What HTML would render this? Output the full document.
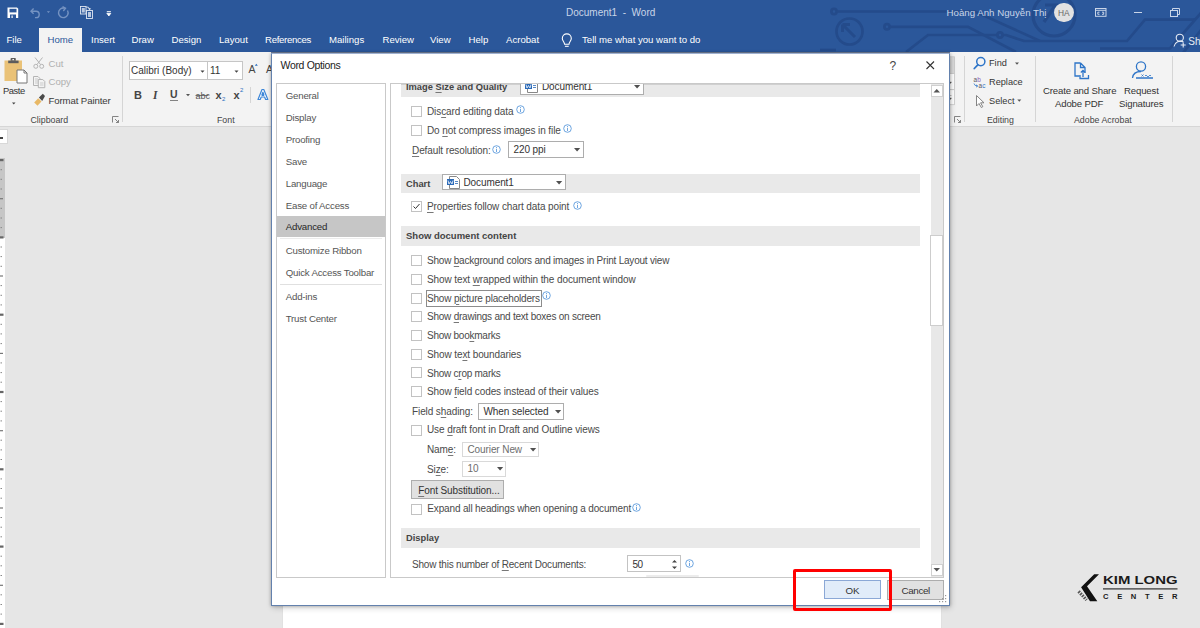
<!DOCTYPE html>
<html><head><meta charset="utf-8">
<style>
*{margin:0;padding:0;box-sizing:border-box}
html,body{width:1200px;height:628px;overflow:hidden;background:#e6e6e6;font-family:"Liberation Sans",sans-serif;position:relative}
.a{position:absolute}
.t{position:absolute;white-space:nowrap;line-height:1}
#title{left:0;top:0;width:1200px;height:52px;background:#2b579a}
#ribbon{left:0;top:52px;width:1200px;height:75px;background:#f3f3f3;border-bottom:1px solid #d6d6d6}
.tab{color:#fff;font-size:9.6px}
.rb{color:#444;font-size:9.6px}
.gl{color:#444;font-size:8.8px}
.cb{width:11px;height:11px;border:1px solid #c2c2c2;background:#fff}
u{text-decoration-color:#777;text-underline-offset:1.5px}
.sep{position:absolute;width:1px;background:#d5d5d5}
</style></head><body>

<div id="title" class="a">
<svg class="a" style="left:0;top:0" width="1200" height="52">
 <g stroke="#244b8b" stroke-width="2.7" fill="none">
  <circle cx="834" cy="11.5" r="2.6"/>
  <path d="M836.6 11.5 H975 L1040 41"/>
  <circle cx="849.5" cy="31.5" r="13"/>
  <path d="M842.5 24.5 L855 37 M842.5 24.5 V32 M842.5 24.5 H850" stroke-width="3"/>
  <circle cx="887" cy="26.8" r="2.6"/>
  <path d="M889.6 26.8 H968 L1016 52"/>
  <path d="M906 52 L928 35 H997.4 M1002.6 35 H1006 L1024 41 H1127 L1145 19.6 H1196"/>
  <path d="M1100 48.5 H1170 L1201 13 M1201 30 L1183 53"/>
  <circle cx="1000" cy="35" r="2.6"/>
  <circle cx="1054" cy="15" r="21" stroke-width="3.2"/>
  <path d="M1044 22 L1055.5 5 H1045" stroke-width="3.2"/>
  <path d="M820 50 H836"/>
 </g>
</svg>
<!-- QAT icons -->
<svg class="a" style="left:0;top:0" width="120" height="28">
 <path d="M7.5 7.5 H17 L18.2 8.7 V18 H7.5 Z" fill="#fff"/>
 <rect x="9.5" y="8.8" width="7" height="3.6" fill="#2b579a"/>
 <rect x="10" y="14.5" width="6" height="3.5" fill="#2b579a"/>
 <rect x="11.5" y="15.5" width="1.2" height="2.5" fill="#fff"/>
 <g fill="none" stroke="#7593c2" stroke-width="1.4">
  <path d="M31 11.2 H36 A3.2 3.2 0 0 1 36 17.6 H35"/>
  <path d="M33.6 8.6 L31 11.2 L33.6 13.8"/>
  <path d="M67.5 10.5 A4.8 4.8 0 1 1 64.5 8.2"/>
  <path d="M62.5 6.6 L65.5 8.3 L63.3 11"/>
 </g>
 <path d="M46.8 11.3 h3.3 l-1.65 1.6z" fill="#7593c2"/>
 <g fill="none" stroke="#dfe6f1" stroke-width="0.9">
  <rect x="80.5" y="6.5" width="5.5" height="7.5"/>
  <rect x="86.5" y="10.5" width="6" height="8"/>
  <path d="M86 7 Q89 6.5 89.5 9"/>
 </g>
 <rect x="81.8" y="8" width="3" height="4.5" fill="#b9c8e0"/>
 <rect x="88" y="12" width="3" height="5" fill="#b9c8e0"/>
 <path d="M88 8.5 h3.2 l-1.6 1.5z" fill="#fff"/>
 <path d="M106.8 11.5 h4.1 M106.8 13.2 h4.1 l-2.05 2.8z" fill="#fff" stroke="#fff" stroke-width="0.8"/>
</svg>
<div class="t" style="left:566px;top:8px;font-size:10px;color:#c9d5e8">Document1&nbsp; - &nbsp;Word</div>
<div class="t" style="left:946.5px;top:8px;font-size:9.7px;color:#c9d5e8">Hoàng Anh Nguyễn Thị</div>
<div class="a" style="left:1054px;top:2.6px;width:19.6px;height:19.6px;border-radius:50%;background:#e2e2e2"></div>
<div class="t" style="left:1058px;top:8.9px;font-size:8.4px;color:#666">HA</div>
<svg class="a" style="left:1090px;top:0" width="110" height="52">
 <g fill="none" stroke="#c9d5e8" stroke-width="1">
  <rect x="5.5" y="8.5" width="10.5" height="7.8"/>
  <path d="M5.5 10.3 H16 M9.5 12.2 H7.8 V14.3 H9.5 M12 12.2 H13.7 V14.3 H12"/>
  <path d="M44 12.5 H52"/>
  <rect x="80.5" y="10.5" width="7" height="6"/>
  <path d="M82.5 10.5 V8.5 H89.5 V14.5 H87.5"/>
 </g>
 <g fill="none" stroke="#e6ecf5" stroke-width="1.1">
  <circle cx="89.8" cy="37.8" r="3.6"/>
  <path d="M84 46.5 A6.5 6.5 0 0 1 93.5 42"/>
  <path d="M93.2 42.5 V47.5 M90.7 45 H95.7"/>
 </g>
</svg>
<div class="t" style="left:1188.3px;top:36.6px;font-size:10px;color:#e6ecf5">Share</div>
</div>

<!-- tabs -->
<div class="a" style="left:39px;top:28px;width:43px;height:25px;background:#f3f3f3"></div>
<div class="t tab" style="left:6.5px;top:35px">File</div>
<div class="t tab" style="left:47.5px;top:35px;color:#2b579a">Home</div>
<div class="t tab" style="left:91px;top:35px">Insert</div>
<div class="t tab" style="left:131.5px;top:35px">Draw</div>
<div class="t tab" style="left:171.5px;top:35px">Design</div>
<div class="t tab" style="left:219px;top:35px">Layout</div>
<div class="t tab" style="left:265px;top:35px;letter-spacing:-0.3px">References</div>
<div class="t tab" style="left:329px;top:35px">Mailings</div>
<div class="t tab" style="left:382.5px;top:35px">Review</div>
<div class="t tab" style="left:430px;top:35px">View</div>
<div class="t tab" style="left:468.5px;top:35px">Help</div>
<div class="t tab" style="left:506px;top:35px">Acrobat</div>
<svg class="a" style="left:558px;top:31px" width="20" height="20">
 <g fill="none" stroke="#fff" stroke-width="1.1">
  <path d="M6.6 13.2 C6.6 11 4.3 9.8 4.3 7.4 A4.5 4.5 0 0 1 13.3 7.4 C13.3 9.8 11 11 11 13.2 Z"/>
  <path d="M6.9 15.3 h3.8"/>
 </g>
</svg>
<div class="t tab" style="left:582px;top:35px">Tell me what you want to do</div>

<div id="ribbon" class="a"></div>

<!-- Clipboard group -->
<svg class="a" style="left:0;top:52px" width="125" height="75">
 <rect x="4.5" y="8.5" width="17.5" height="20.5" fill="#eac277"/>
 <path d="M8.2 8.6 H18.6 V11.2 H8.2 Z" fill="#5c5c5c"/>
 <path d="M10.6 8.8 V6.8 Q10.6 6 11.4 6 H15 Q15.8 6 15.8 6.8 V8.8 Z" fill="#5c5c5c"/>
 <rect x="12.4" y="7" width="1.6" height="1.2" fill="#f3f3f3"/>
 <path d="M17 18 H24 L27 21 V31 H17 Z" fill="#fff" stroke="#777" stroke-width="1"/>
 <path d="M24 18 V21 H27" fill="none" stroke="#777" stroke-width="1"/>
 <path d="M12 50.5 h3.5 l-1.75 2z" fill="#444"/>
 <g fill="none" stroke="#b4b4b4" stroke-width="1">
  <circle cx="35.8" cy="14.3" r="2"/><circle cx="41.7" cy="14.3" r="2"/>
  <path d="M37 12.5 L42.5 5.5 M40.5 12.5 L35 5.5"/>
  <path d="M33.5 24.5 h4.5 l1.8 1.8 v7.2 h-6.3z"/>
  <path d="M38.3 27.5 h4.5 l2 2 v6.2 h-6.5z" fill="#f3f3f3"/>
  <path d="M35 27 h3 M35 29 h3 M35 31 h3 M40 31 h3.5 M40 33 h3.5" stroke="#c0c0c0" stroke-width="0.8"/>
 </g>
 <path d="M34.2 50.5 L38.2 46.3 L41.5 49.6 L37.5 53.8 Z" fill="#e8b865"/>
 <path d="M38.9 45.6 L42.8 41.7 L45 43.9 L42.2 48.9 Z" fill="#4a4a4a"/>
 <path d="M112.5 64.5 h6 M112.5 64.5 v6 M115 67 l3.5 3.5 M118.5 68 v2.5 h-2.5" fill="none" stroke="#777" stroke-width="0.9"/>
</svg>
<div class="t rb" style="left:2.9px;top:86.2px;font-size:9.4px;color:#333;letter-spacing:-0.4px">Paste</div>
<div class="t rb" style="left:48.5px;top:59px;color:#b0b0b0">Cut</div>
<div class="t rb" style="left:48.5px;top:77px;color:#b0b0b0">Copy</div>
<div class="t rb" style="left:48.5px;top:96px;color:#3a3a3a;letter-spacing:-0.1px">Format Painter</div>
<div class="t gl" style="left:30.5px;top:116px">Clipboard</div>
<div class="sep" style="left:122px;top:56px;height:66px"></div>

<!-- Font group -->
<div class="a" style="left:129px;top:61px;width:79px;height:19px;background:#fff;border:1px solid #c6c6c6"></div>
<div class="a" style="left:207px;top:61px;width:36px;height:19px;background:#fff;border:1px solid #c6c6c6"></div>
<div class="t rb" style="left:131px;top:66px;font-size:10px;color:#333">Calibri (Body)</div>
<div class="t rb" style="left:210px;top:66px;font-size:10px;color:#333">11</div>
<svg class="a" style="left:120px;top:52px" width="152" height="75">
 <path d="M80.5 18.5 h4 l-2 2.2z M114.5 18.5 h4 l-2 2.2z" fill="#444"/>
 <text x="128.5" y="21.3" font-family="Liberation Sans" font-size="10.5" fill="#444">A</text>
 <path d="M134.8 13.8 l1.5 -2 l1.5 2z" fill="#2b6fc0"/>
 <text x="146" y="21.3" font-family="Liberation Sans" font-size="10.5" fill="#444">A</text>
 <text x="14" y="47" font-family="Liberation Sans" font-size="11" font-weight="bold" fill="#444">B</text>
 <text x="33" y="47" font-family="Liberation Serif" font-size="11.5" font-style="italic" font-weight="bold" fill="#444">I</text>
 <text x="50" y="46" font-family="Liberation Sans" font-size="10.5" font-weight="bold" fill="#444">U</text>
 <path d="M50 48.5 h8" stroke="#666" stroke-width="0.8"/>
 <path d="M66 42 h4 l-2 2.2z" fill="#555"/>
 <text x="75.5" y="47" font-family="Liberation Sans" font-size="9" fill="#555">abc</text>
 <path d="M75.5 43.5 h13" stroke="#555" stroke-width="0.8"/>
 <text x="95.5" y="47" font-family="Liberation Sans" font-size="11" font-weight="bold" fill="#444">x</text>
 <text x="102" y="49" font-family="Liberation Sans" font-size="6" fill="#2b6fc0">2</text>
 <text x="113.5" y="47" font-family="Liberation Sans" font-size="11" font-weight="bold" fill="#444">x</text>
 <text x="120" y="40" font-family="Liberation Sans" font-size="6" fill="#2b6fc0">2</text>
 <path d="M130.5 35 v16" stroke="#d5d5d5"/>
 <path d="M138 47.5 L142 37.5 L143.8 37.5 L147.8 47.5 L145.6 47.5 L144.6 45 L141.2 45 L140.2 47.5 Z M141.9 43 L143.9 43 L142.9 40.2 Z" fill="#fff" stroke="#3c86d8" stroke-width="1.2" stroke-linejoin="round"/><path d="M141.6 44 L142.9 40.8 L144.2 44Z" fill="#3c86d8"/>
</svg>
<div class="t gl" style="left:217px;top:116px">Font</div>

<!-- right side of ribbon -->
<svg class="a" style="left:949px;top:52px" width="251" height="75">
 <rect x="0" y="4.8" width="5.5" height="16.7" fill="#dadada" stroke="#c8c8c8" stroke-width="0.8"/>
 <rect x="0" y="21.5" width="5.5" height="16.2" fill="#fff" stroke="#c8c8c8" stroke-width="0.8"/>
 <rect x="0" y="37.7" width="5.5" height="15" fill="#fff" stroke="#c8c8c8" stroke-width="0.8"/>
 <path d="M0 30 h2.5 l-1.25 1.5z M0 46 h2.5 l-1.25 1.5z M0 43.5 h2.5" fill="#555" stroke="#555" stroke-width="0.4"/>
 <path d="M5.5 64.5 h6 M5.5 64.5 v6 M8 67 l3.5 3.5 M11.5 68 v2.5 h-2.5" fill="none" stroke="#777" stroke-width="0.9"/>
 <path d="M15.5 4 v66 M86.5 4 v66 M223.5 4 v66" stroke="#d5d5d5"/>
 <g fill="none" stroke="#2e75c8" stroke-width="1.5">
  <circle cx="31.8" cy="9.6" r="4.1"/>
  <path d="M28.8 12.8 L25.3 16.5" stroke-width="1.8" stroke-linecap="round"/>
 </g>
 <text x="24.5" y="29.8" font-family="Liberation Sans" font-size="6.4" fill="#555">a</text>
 <text x="28.2" y="29.8" font-family="Liberation Sans" font-size="6.4" fill="#8b5cb8">b</text>
 <text x="29.5" y="35.6" font-family="Liberation Sans" font-size="6.4" fill="#555">a</text>
 <text x="33.2" y="35.6" font-family="Liberation Sans" font-size="6.4" fill="#2e75c8">c</text>
 <path d="M25 31.5 Q25.5 34 28.5 34 M27 32.8 L28.7 34 L27 35.2" fill="none" stroke="#2e75c8" stroke-width="0.8"/>
 <path d="M27.5 43.5 V54 L30 51.5 L32.3 55.5 L33.8 54.7 L31.6 50.8 H35 Z" fill="#fff" stroke="#777" stroke-width="0.9"/>
 <path d="M66 10.5 h4 l-2 2.2z M68.3 47.5 h4 l-2 2.2z" fill="#555"/>
 <g fill="none" stroke="#2e75c8" stroke-width="1.3">
  <path d="M131.5 11 H126 V24 H130.5 M131.5 11 L136 15.5 V21 M131.5 11 V15.5 H136"/>
  <path d="M134 18.5 V25 M131.8 20.5 L134 18.3 L136.2 20.5 M131 23 V26.5 H139.5 V23"/>
  <circle cx="192" cy="14.5" r="4.6"/>
  <path d="M183.5 26 C184 21.5 187.5 19.5 192 19.5 M187 26 H190"/>
  <path d="M190 26 H204" stroke-width="1.5"/>
 </g>
 <path d="M192.5 22.5 l2 2 M194.5 22.5 l-2 2 M196 24 q1 -2 2 0 q1 2 2 0 q1 -2 2 0" fill="none" stroke="#2e75c8" stroke-width="0.8"/>
</svg>
<div class="t rb" style="left:989px;top:59px;color:#333;font-size:9.2px">Find</div>
<div class="t rb" style="left:989px;top:78px;color:#333;font-size:9.2px">Replace</div>
<div class="t rb" style="left:989px;top:96.5px;color:#333;font-size:9.2px">Select</div>
<div class="t gl" style="left:987px;top:116px">Editing</div>
<div class="t rb" style="left:1043px;top:86px;color:#333;letter-spacing:-0.15px">Create and Share</div>
<div class="t rb" style="left:1055px;top:99px;color:#333;letter-spacing:-0.15px">Adobe PDF</div>
<div class="t rb" style="left:1124px;top:86px;color:#333;letter-spacing:-0.15px">Request</div>
<div class="t rb" style="left:1119px;top:99px;color:#333;letter-spacing:-0.15px">Signatures</div>
<div class="t gl" style="left:1074px;top:116px">Adobe Acrobat</div>


<!-- document area -->
<div class="a" style="left:0;top:128.5px;width:7.5px;height:15px;background:#fff;border:1px solid #d8d8d8;border-left:none"></div><div class="a" style="left:0;top:137px;width:3px;height:1.5px;background:#444"></div>
<div class="a" style="left:0;top:158px;width:4.5px;height:79.5px;background:#c6c6c6"></div>
<div class="a" style="left:0;top:237.5px;width:4.5px;height:391px;background:#fff"></div>
<svg class="a" style="left:0;top:0" width="6" height="628"><rect x="0" y="159.0" width="3.5" height="2.2" fill="#666"/><rect x="0.5" y="169.2" width="1.5" height="1" fill="#888"/><rect x="0.5" y="178.8" width="1.5" height="1" fill="#888"/><rect x="0.5" y="188.5" width="1.5" height="1" fill="#888"/><rect x="0" y="198.1" width="3" height="1.2" fill="#777"/><rect x="0.5" y="207.8" width="1.5" height="1" fill="#888"/><rect x="0.5" y="217.5" width="1.5" height="1" fill="#888"/><rect x="0.5" y="227.1" width="1.5" height="1" fill="#888"/><rect x="0" y="236.3" width="3.5" height="2.2" fill="#666"/><rect x="0.5" y="246.5" width="1.5" height="1" fill="#888"/><rect x="0.5" y="256.1" width="1.5" height="1" fill="#888"/><rect x="0.5" y="265.8" width="1.5" height="1" fill="#888"/><rect x="0" y="275.4" width="3" height="1.2" fill="#777"/><rect x="0.5" y="285.1" width="1.5" height="1" fill="#888"/><rect x="0.5" y="294.8" width="1.5" height="1" fill="#888"/><rect x="0.5" y="304.4" width="1.5" height="1" fill="#888"/><rect x="0" y="313.6" width="3.5" height="2.2" fill="#666"/><rect x="0.5" y="323.8" width="1.5" height="1" fill="#888"/><rect x="0.5" y="333.4" width="1.5" height="1" fill="#888"/><rect x="0.5" y="343.1" width="1.5" height="1" fill="#888"/><rect x="0" y="352.8" width="3" height="1.2" fill="#777"/><rect x="0.5" y="362.4" width="1.5" height="1" fill="#888"/><rect x="0.5" y="372.1" width="1.5" height="1" fill="#888"/><rect x="0.5" y="381.7" width="1.5" height="1" fill="#888"/><rect x="0" y="390.9" width="3.5" height="2.2" fill="#666"/><rect x="0.5" y="401.1" width="1.5" height="1" fill="#888"/><rect x="0.5" y="410.7" width="1.5" height="1" fill="#888"/><rect x="0.5" y="420.4" width="1.5" height="1" fill="#888"/><rect x="0" y="430.1" width="3" height="1.2" fill="#777"/><rect x="0.5" y="439.7" width="1.5" height="1" fill="#888"/><rect x="0.5" y="449.4" width="1.5" height="1" fill="#888"/><rect x="0.5" y="459.0" width="1.5" height="1" fill="#888"/><rect x="0" y="468.2" width="3.5" height="2.2" fill="#666"/><rect x="0.5" y="478.4" width="1.5" height="1" fill="#888"/><rect x="0.5" y="488.0" width="1.5" height="1" fill="#888"/><rect x="0.5" y="497.7" width="1.5" height="1" fill="#888"/><rect x="0" y="507.4" width="3" height="1.2" fill="#777"/><rect x="0.5" y="517.0" width="1.5" height="1" fill="#888"/><rect x="0.5" y="526.7" width="1.5" height="1" fill="#888"/><rect x="0.5" y="536.3" width="1.5" height="1" fill="#888"/><rect x="0" y="545.5" width="3.5" height="2.2" fill="#666"/><rect x="0.5" y="555.7" width="1.5" height="1" fill="#888"/><rect x="0.5" y="565.3" width="1.5" height="1" fill="#888"/><rect x="0.5" y="575.0" width="1.5" height="1" fill="#888"/><rect x="0" y="584.7" width="3" height="1.2" fill="#777"/><rect x="0.5" y="594.3" width="1.5" height="1" fill="#888"/><rect x="0.5" y="604.0" width="1.5" height="1" fill="#888"/><rect x="0.5" y="613.6" width="1.5" height="1" fill="#888"/><rect x="0" y="622.8" width="3.5" height="2.2" fill="#666"/></svg>
<div class="a" style="left:283px;top:127px;width:658px;height:501px;background:#fff;box-shadow:0 0 1px #c8c8c8"></div>

<!-- dialog -->
<div class="a" style="left:271px;top:52px;width:679px;height:1px;background:#737f98"></div>
<div class="a" style="left:271px;top:53px;width:679px;height:553px;background:#fff;border:1px solid #6381ad;border-top-color:#9fb1d0;box-shadow:0 0 3px rgba(0,0,0,0.28),1px 2px 6px rgba(0,0,0,0.18)"></div>

<div class="t" style="left:280.5px;top:60.2px;font-size:10.5px;color:#222;letter-spacing:-0.33px">Word Options</div>
<svg class="a" style="left:885px;top:58px" width="55" height="16"><text x="4.5" y="11.5" font-family="Liberation Sans" font-size="12" fill="#444">?</text><path d="M41.5 3.5 L49 11 M49 3.5 L41.5 11" stroke="#333" stroke-width="1.1"/></svg>
<div class="a" style="left:276px;top:83px;width:110px;height:495px;border:1px solid #c9c9c9;background:#fff"></div>
<div class="a" style="left:277px;top:215.8px;width:108px;height:21.7px;background:#c6c6c6"></div>
<div class="a" style="left:280px;top:284px;width:102px;height:1px;background:#e0e0e0"></div>
<div class="a" style="left:280px;top:238.2px;width:102px;height:1px;background:#ececec"></div>
<div class="t" style="left:285.7px;top:90.79px;font-size:9.7px;color:#555;letter-spacing:-0.2px;">General</div>
<div class="t" style="left:285.7px;top:112.79px;font-size:9.7px;color:#555;letter-spacing:-0.2px;">Display</div>
<div class="t" style="left:285.7px;top:134.79px;font-size:9.7px;color:#555;letter-spacing:-0.2px;">Proofing</div>
<div class="t" style="left:285.7px;top:156.79px;font-size:9.7px;color:#555;letter-spacing:-0.2px;">Save</div>
<div class="t" style="left:285.7px;top:178.79px;font-size:9.7px;color:#555;letter-spacing:-0.2px;">Language</div>
<div class="t" style="left:285.7px;top:200.79px;font-size:9.7px;color:#555;letter-spacing:-0.2px;">Ease of Access</div>
<div class="t" style="left:285.7px;top:222.29px;font-size:9.7px;color:#262626;letter-spacing:-0.2px;">Advanced</div>
<div class="t" style="left:285.7px;top:246.49px;font-size:9.7px;color:#555;letter-spacing:-0.2px;">Customize Ribbon</div>
<div class="t" style="left:285.7px;top:268.49px;font-size:9.7px;color:#555;letter-spacing:-0.2px;">Quick Access Toolbar</div>
<div class="t" style="left:285.7px;top:292.49px;font-size:9.7px;color:#555;letter-spacing:-0.2px;">Add-ins</div>
<div class="t" style="left:285.7px;top:314.49px;font-size:9.7px;color:#555;letter-spacing:-0.2px;">Trust Center</div>
<div class="a" style="left:390px;top:83px;width:554px;height:495px;border:1px solid #c9c9c9;background:#fff"></div>
<div class="a" style="left:391px;top:84px;width:538px;height:492px;overflow:hidden" id="inner"></div>
<div class="a" style="left:401px;top:84.0px;width:519px;height:13px;background:#e9e9e9"></div>
<div class="a" style="left:401px;top:173.5px;width:519px;height:19.0px;background:#e9e9e9"></div>
<div class="a" style="left:401px;top:226.2px;width:519px;height:19.6px;background:#e9e9e9"></div>
<div class="a" style="left:401px;top:528.0px;width:519px;height:20.0px;background:#e9e9e9"></div>
<div class="a" style="left:401px;top:84px;width:519px;height:1px;background:#d0d0d0"></div>
<div class="t" style="left:406.0px;top:83.13px;font-size:9.30px;color:#444;font-weight:bold">Image <u>S</u>ize and Quality</div>
<div class="a" style="left:520.0px;top:78.0px;width:123.6px;height:16.5px;background:#fff;border:1px solid #adadad"></div>
<div class="t" style="left:542.0px;top:82.03px;font-size:10px;color:#333;letter-spacing:-0.1px;">Document1</div>
<svg class="a" style="left:634.1px;top:84.8px" width="8" height="5"><path d="M0 0 H6.2 L3.1 3.4Z" fill="#505050"/></svg>
<svg class="a" style="left:525.0px;top:80.0px" width="14" height="13"><path d="M2.5 0.5 H9.5 L12.5 3.5 V12.5 H2.5Z" fill="#fff" stroke="#888" stroke-width="1"/><rect x="0" y="3" width="7" height="6" fill="#2b6ab8"/><path d="M1 4.5 L2 8 L3.5 5.5 L5 8 L6 4.5" fill="none" stroke="#fff" stroke-width="0.8"/><path d="M8 5.5 h3 M8 7.5 h3" stroke="#2b6ab8" stroke-width="0.8"/></svg>
<div class="a" style="left:391px;top:74px;width:553px;height:9px;background:#fff"></div>
<div class="a" style="left:390px;top:83px;width:554px;height:1px;background:#c9c9c9"></div>
<div class="a cb" style="left:411.0px;top:106.0px"></div>
<div class="t" style="left:427.0px;top:106.53px;font-size:10px;color:#4a4a4a;letter-spacing:-0.1px;">Dis<u>c</u>ard editing data</div>
<svg class="a" style="left:516.0px;top:104.5px" width="10" height="10"><circle cx="4.5" cy="4.5" r="3.8" fill="none" stroke="#4a8fd8" stroke-width="0.8"/><path d="M4.5 3.8 V7" stroke="#4a8fd8" stroke-width="0.8"/><circle cx="4.5" cy="2.4" r="0.5" fill="#4a8fd8"/></svg>
<div class="a cb" style="left:411.0px;top:125.0px"></div>
<div class="t" style="left:427.0px;top:125.53px;font-size:10px;color:#4a4a4a;letter-spacing:-0.1px;">Do <u>n</u>ot compress images in file</div>
<svg class="a" style="left:562.5px;top:123.5px" width="10" height="10"><circle cx="4.5" cy="4.5" r="3.8" fill="none" stroke="#4a8fd8" stroke-width="0.8"/><path d="M4.5 3.8 V7" stroke="#4a8fd8" stroke-width="0.8"/><circle cx="4.5" cy="2.4" r="0.5" fill="#4a8fd8"/></svg>
<div class="t" style="left:412.0px;top:145.53px;font-size:10px;color:#4a4a4a;letter-spacing:-0.1px;"><u>D</u>efault resolution:</div>
<svg class="a" style="left:491.5px;top:144.5px" width="10" height="10"><circle cx="4.5" cy="4.5" r="3.8" fill="none" stroke="#4a8fd8" stroke-width="0.8"/><path d="M4.5 3.8 V7" stroke="#4a8fd8" stroke-width="0.8"/><circle cx="4.5" cy="2.4" r="0.5" fill="#4a8fd8"/></svg>
<div class="a" style="left:507.5px;top:141.0px;width:76.1px;height:17.0px;background:#fff;border:1px solid #adadad"></div>
<div class="t" style="left:513.5px;top:145.03px;font-size:10px;color:#333;letter-spacing:-0.1px;">220 ppi</div>
<svg class="a" style="left:574.1px;top:148.3px" width="8" height="5"><path d="M0 0 H6.2 L3.1 3.4Z" fill="#505050"/></svg>
<div class="t" style="left:406.0px;top:180.13px;font-size:9.30px;color:#444;font-weight:bold">Chart</div>
<div class="a" style="left:442.0px;top:174.0px;width:123.6px;height:16.0px;background:#fff;border:1px solid #adadad"></div>
<div class="t" style="left:463.5px;top:177.53px;font-size:10px;color:#333;letter-spacing:-0.1px;">Document1</div>
<svg class="a" style="left:556.1px;top:180.8px" width="8" height="5"><path d="M0 0 H6.2 L3.1 3.4Z" fill="#505050"/></svg>
<svg class="a" style="left:447.0px;top:176.0px" width="14" height="13"><path d="M2.5 0.5 H9.5 L12.5 3.5 V12.5 H2.5Z" fill="#fff" stroke="#888" stroke-width="1"/><rect x="0" y="3" width="7" height="6" fill="#2b6ab8"/><path d="M1 4.5 L2 8 L3.5 5.5 L5 8 L6 4.5" fill="none" stroke="#fff" stroke-width="0.8"/><path d="M8 5.5 h3 M8 7.5 h3" stroke="#2b6ab8" stroke-width="0.8"/></svg>
<div class="a cb" style="left:411.0px;top:201.2px"></div>
<svg class="a" style="left:411.0px;top:201.2px" width="11" height="11"><path d="M2.5 5.5 L4.5 7.5 L8.5 3" fill="none" stroke="#333" stroke-width="1"/></svg>
<div class="t" style="left:427.0px;top:202.03px;font-size:10px;color:#4a4a4a;letter-spacing:-0.1px;"><u>P</u>roperties follow chart data point</div>
<svg class="a" style="left:573.4px;top:200.8px" width="10" height="10"><circle cx="4.5" cy="4.5" r="3.8" fill="none" stroke="#4a8fd8" stroke-width="0.8"/><path d="M4.5 3.8 V7" stroke="#4a8fd8" stroke-width="0.8"/><circle cx="4.5" cy="2.4" r="0.5" fill="#4a8fd8"/></svg>
<div class="t" style="left:406.0px;top:230.56px;font-size:9.50px;color:#444;font-weight:bold">Show document content</div>
<div class="a cb" style="left:411.0px;top:255.3px"></div>
<div class="t" style="left:427.0px;top:256.04px;font-size:10px;color:#4a4a4a;letter-spacing:-0.21px;">Show <u>b</u>ackground colors and images in Print Layout view</div>
<div class="a cb" style="left:411.0px;top:273.9px"></div>
<div class="t" style="left:427.0px;top:274.79px;font-size:10px;color:#4a4a4a;letter-spacing:-0.1px;">Show text <u>w</u>rapped within the document window</div>
<div class="a cb" style="left:411.0px;top:292.6px"></div>
<div class="t" style="left:427.0px;top:293.54px;font-size:10px;color:#4a4a4a;letter-spacing:-0.18px;">Show <u>p</u>icture placeholders</div>
<div class="a cb" style="left:411.0px;top:311.2px"></div>
<div class="t" style="left:427.0px;top:312.29px;font-size:10px;color:#4a4a4a;letter-spacing:-0.23px;">Show <u>d</u>rawings and text boxes on screen</div>
<div class="a cb" style="left:411.0px;top:329.9px"></div>
<div class="t" style="left:427.0px;top:331.04px;font-size:10px;color:#4a4a4a;letter-spacing:-0.25px;">Show boo<u>k</u>marks</div>
<div class="a cb" style="left:411.0px;top:348.6px"></div>
<div class="t" style="left:427.0px;top:349.79px;font-size:10px;color:#4a4a4a;letter-spacing:-0.1px;">Show te<u>x</u>t boundaries</div>
<div class="a cb" style="left:411.0px;top:367.2px"></div>
<div class="t" style="left:427.0px;top:368.54px;font-size:10px;color:#4a4a4a;letter-spacing:-0.25px;">Show c<u>r</u>op marks</div>
<div class="a cb" style="left:411.0px;top:385.9px"></div>
<div class="t" style="left:427.0px;top:387.29px;font-size:10px;color:#4a4a4a;letter-spacing:-0.1px;">Show <u>f</u>ield codes instead of their values</div>
<div class="a" style="left:425.5px;top:290.2px;width:116.5px;height:16.5px;border:1px solid #8c8c8c"></div>
<svg class="a" style="left:542.1px;top:290.8px" width="10" height="10"><circle cx="4.5" cy="4.5" r="3.8" fill="none" stroke="#4a8fd8" stroke-width="0.8"/><path d="M4.5 3.8 V7" stroke="#4a8fd8" stroke-width="0.8"/><circle cx="4.5" cy="2.4" r="0.5" fill="#4a8fd8"/></svg>
<div class="t" style="left:412.0px;top:406.63px;font-size:10px;color:#4a4a4a;letter-spacing:-0.1px;">Field s<u>h</u>ading:</div>
<div class="a" style="left:478.4px;top:403.3px;width:86.1px;height:16.3px;background:#fff;border:1px solid #adadad"></div>
<div class="t" style="left:483.5px;top:406.53px;font-size:10px;color:#333;letter-spacing:-0.1px;">When selected</div>
<svg class="a" style="left:555.0px;top:410.3px" width="8" height="5"><path d="M0 0 H6.2 L3.1 3.4Z" fill="#505050"/></svg>
<div class="a cb" style="left:411.0px;top:424.5px"></div>
<div class="t" style="left:427.0px;top:425.03px;font-size:10px;color:#4a4a4a;letter-spacing:-0.1px;">Use <u>d</u>raft font in Draft and Outline views</div>
<div class="t" style="left:427.0px;top:444.53px;font-size:10px;color:#4a4a4a;letter-spacing:-0.1px;">Nam<u>e</u>:</div>
<div class="a" style="left:462.4px;top:441.6px;width:77.0px;height:15.8px;background:#fff;border:1px solid #d9d9d9"></div>
<div class="t" style="left:467.5px;top:444.53px;font-size:10px;color:#6d6d6d;letter-spacing:-0.1px;">Courier New</div>
<svg class="a" style="left:529.9px;top:448.3px" width="8" height="5"><path d="M0 0 H6.2 L3.1 3.4Z" fill="#505050"/></svg>
<div class="t" style="left:427.0px;top:464.53px;font-size:10px;color:#4a4a4a;letter-spacing:-0.1px;">Si<u>z</u>e:</div>
<div class="a" style="left:462.0px;top:460.7px;width:44.0px;height:15.9px;background:#fff;border:1px solid #d9d9d9"></div>
<div class="t" style="left:467.5px;top:464.03px;font-size:10px;color:#6d6d6d;letter-spacing:-0.1px;">10</div>
<svg class="a" style="left:496.5px;top:467.4px" width="8" height="5"><path d="M0 0 H6.2 L3.1 3.4Z" fill="#505050"/></svg>
<div class="a" style="left:411px;top:480px;width:93px;height:19px;background:#e1e1e1;border:1px solid #adadad"></div>
<div class="t" style="left:418.2px;top:485.63px;font-size:10px;color:#333;letter-spacing:-0.1px;"><u>F</u>ont Substitution...</div>
<div class="a cb" style="left:411.0px;top:504.0px"></div>
<div class="t" style="left:427.3px;top:504.23px;font-size:10px;color:#4a4a4a;letter-spacing:-0.15px;">Expand all headings when opening a document</div>
<svg class="a" style="left:632.3px;top:503.3px" width="10" height="10"><circle cx="4.5" cy="4.5" r="3.8" fill="none" stroke="#4a8fd8" stroke-width="0.8"/><path d="M4.5 3.8 V7" stroke="#4a8fd8" stroke-width="0.8"/><circle cx="4.5" cy="2.4" r="0.5" fill="#4a8fd8"/></svg>
<div class="t" style="left:406.0px;top:533.53px;font-size:9.30px;color:#444;font-weight:bold">Display</div>
<div class="t" style="left:412.0px;top:559.73px;font-size:10px;color:#4a4a4a;letter-spacing:-0.21px;">Show this number of <u>R</u>ecent Documents:</div>
<div class="a" style="left:627px;top:555.2px;width:54px;height:17px;background:#fff;border:1px solid #c3c3c3"></div>
<div class="t" style="left:632.4px;top:559.8px;font-size:10px;color:#333;letter-spacing:-0.4px;">50</div>
<svg class="a" style="left:671px;top:557.5px" width="8" height="13"><path d="M1 4.5 L3.5 2 L6 4.5 Z M1 8.5 L3.5 11 L6 8.5Z" fill="#444"/></svg>
<svg class="a" style="left:685.0px;top:558.8px" width="10" height="10"><circle cx="4.5" cy="4.5" r="3.8" fill="none" stroke="#4a8fd8" stroke-width="0.8"/><path d="M4.5 3.8 V7" stroke="#4a8fd8" stroke-width="0.8"/><circle cx="4.5" cy="2.4" r="0.5" fill="#4a8fd8"/></svg>
<div class="a" style="left:646px;top:574.5px;width:53px;height:2.5px;background:#ececec;border-radius:1px"></div>
<div class="a" style="left:930.5px;top:84px;width:12.5px;height:493px;background:#e8e8e8"></div>
<div class="a" style="left:931px;top:85px;width:12px;height:12px;background:#fff;border:1px solid #d0d0d0"></div>
<svg class="a" style="left:933px;top:88px" width="8" height="6"><path d="M0.5 4.5 L3.75 1 L7 4.5Z" fill="#555"/></svg>
<div class="a" style="left:931px;top:564px;width:12px;height:12px;background:#fff;border:1px solid #d0d0d0"></div>
<svg class="a" style="left:933px;top:567px" width="8" height="6"><path d="M0.5 1 L3.75 4.5 L7 1Z" fill="#555"/></svg>
<div class="a" style="left:930px;top:235.2px;width:13px;height:90.5px;background:#fff;border:1px solid #cdcdcd"></div>
<div class="a" style="left:823.5px;top:580px;width:57px;height:19px;background:#e1ecf9;border:1px solid #8ba8d6"></div>
<div class="t" style="left:845.5px;top:585.9px;font-size:9.8px;color:#333;">OK</div>
<div class="a" style="left:887px;top:580px;width:57px;height:19.5px;background:#e1e1e1;border:1px solid #adadad"></div>
<div class="t" style="left:901.5px;top:585.9px;font-size:9.8px;color:#333;letter-spacing:-0.35px">Cancel</div>
<svg class="a" style="left:938px;top:594px" width="10" height="10"><g fill="#999"><rect x="7" y="1" width="1.2" height="1.2"/><rect x="7" y="4" width="1.2" height="1.2"/><rect x="4" y="4" width="1.2" height="1.2"/><rect x="7" y="7" width="1.2" height="1.2"/><rect x="4" y="7" width="1.2" height="1.2"/><rect x="1" y="7" width="1.2" height="1.2"/></g></svg>
<div class="a" style="left:792.5px;top:568.5px;width:99px;height:42px;border:3px solid #ff0000;border-radius:2px"></div>
<svg class="a" style="left:1075px;top:570px" width="110" height="36">
 <path d="M19.2 4.2 L24 4.2 L12 16.2 L22.3 31.2 L15 31.2 L6.1 17.3 Z" fill="#111"/>
 <path d="M3.6 21.4 L11.6 30" stroke="#555" stroke-width="3.2" stroke-dasharray="1.6 1.1"/>
 <text x="28" y="14.2" font-family="Liberation Sans" font-weight="bold" font-size="10.3" fill="#1a1a1a" textLength="74.5" lengthAdjust="spacingAndGlyphs">KIM LONG</text>
 <rect x="28" y="18" width="74.5" height="1.7" fill="#666"/>
 <text x="28" y="28.8" font-family="Liberation Sans" font-weight="bold" font-size="7.6" fill="#1a1a1a" textLength="74.5" lengthAdjust="spacing">CENTER</text>
</svg>

</body></html>
